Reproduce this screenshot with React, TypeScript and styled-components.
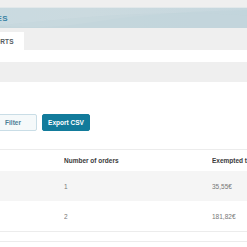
import styled, { createGlobalStyle } from 'styled-components';

const GlobalStyle = createGlobalStyle`
	html, body {
		margin: 0;
		padding: 0;
		background: #ffffff;
		overflow: hidden;
	}
	body {
		font-family: 'Liberation Sans', Arial, sans-serif;
	}
`;

const rows = [
	{ label: 'Januar', orders: '1', amount: '35,55€' },
	{ label: 'Februar', orders: '2', amount: '181,82€' },
];

const App = () => {
	return (
		<>
			<GlobalStyle />
			<Page>
				<TopStrip />
				<Banner>
					<BannerWave viewBox="0 0 300 21" preserveAspectRatio="none">
						<path d="M0 12 C 40 22, 90 22, 130 16 C 170 10, 210 4, 300 2 L300 21 L0 21 Z" fill="#bfd3db" opacity="0.6" />
						<path d="M0 21 C 60 18, 120 8, 200 6 C 240 5, 270 6, 300 8 L300 21 Z" fill="#c3d5dc" opacity="0.5" />
					</BannerWave>
					<Title>SALES</Title>
				</Banner>
				<TabBar>
					<Tab>REPORTS</Tab>
				</TabBar>
				<Section>
					<SearchField />
					<Actions>
						<Button $variant="light">Filter</Button>
						<Button $variant="primary">Export CSV</Button>
					</Actions>
				</Section>
				<Table>
					<HeadRow>
						<Cell>Month</Cell>
						<Cell>Number of orders</Cell>
						<Cell>Exempted taxes</Cell>
					</HeadRow>
					{rows.map((row, i) => (
						<BodyRow key={row.label} $striped={i % 2 === 0}>
							<Cell>{row.label}</Cell>
							<Cell>{row.orders}</Cell>
							<Cell>{row.amount}</Cell>
						</BodyRow>
					))}
				</Table>
				<Footer />
			</Page>
		</>
	);
};

export default App;

const Page = styled.div`
	margin-left: -40px;
	width: 287px;
`;

const TopStrip = styled.div`
	height: 7px;
	background: #efefef;
`;

const Banner = styled.div`
	position: relative;
	height: 21px;
	background: linear-gradient(90deg, #c9dae1 0%, #cbdadf 45%, #c6d7de 100%);
	border-top: 1px solid #e2e8ea;
	box-sizing: border-box;
	display: flex;
	align-items: center;
	padding-left: 20px;
	overflow: hidden;
`;

const BannerWave = styled.svg`
	position: absolute;
	left: 0;
	top: 0;
	width: 100%;
	height: 100%;
`;

const Title = styled.div`
	position: relative;
	font-size: 8px;
	font-weight: 700;
	color: #3a83a4;
	letter-spacing: 0.2px;
`;

const TabBar = styled.div`
	height: 22px;
	background: #efefef;
	display: flex;
	align-items: flex-end;
	padding-left: 11px;
`;

const Tab = styled.div`
	height: 18px;
	background: #ffffff;
	display: flex;
	align-items: center;
	padding: 0 10px;
	font-size: 6.5px;
	font-weight: 700;
	color: #555d62;
	letter-spacing: 0.2px;
`;

const Section = styled.div`
	padding-top: 12px;
`;

const SearchField = styled.div`
	height: 20px;
	background: #efefef;
`;

const Actions = styled.div`
	display: flex;
	gap: 5px;
	padding: 32px 0 0 29px;
`;

const Button = styled.button<{ $variant: 'light' | 'primary' }>`
	height: 17px;
	width: 48px;
	padding: 0;
	box-sizing: border-box;
	border-radius: 2px;
	font-family: inherit;
	font-size: 6.5px;
	font-weight: 700;
	background: ${({ $variant }) => ($variant === 'primary' ? '#127b9b' : '#f5f9fa')};
	color: ${({ $variant }) => ($variant === 'primary' ? '#ffffff' : '#4d7f96')};
	border: 1px solid ${({ $variant }) => ($variant === 'primary' ? '#127b9b' : '#c9dde6')};
`;

const Table = styled.div`
	margin-top: 18px;
	border-top: 1px solid #ececec;
`;

const HeadRow = styled.div`
	display: grid;
	grid-template-columns: 104px 148px 1fr;
	height: 21px;
	align-items: center;
	font-size: 6.5px;
	font-weight: 700;
	color: #3a3a3a;
`;

const BodyRow = styled.div<{ $striped: boolean }>`
	display: grid;
	grid-template-columns: 104px 148px 1fr;
	height: 30px;
	align-items: center;
	font-size: 6.5px;
	color: #777777;
	background: ${({ $striped }) => ($striped ? '#f5f5f5' : '#ffffff')};
	border-bottom: ${({ $striped }) => ($striped ? 'none' : '1px solid #ececec')};
`;

const Cell = styled.div`
	white-space: nowrap;
	overflow: hidden;
`;

const Footer = styled.div`
	margin-top: 9px;
	border-top: 1px solid #ececec;
	height: 10px;
`;
